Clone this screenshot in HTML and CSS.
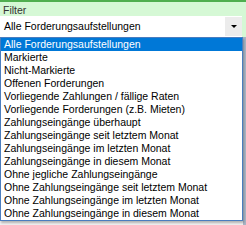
FILE: index.html
```html
<!DOCTYPE html>
<html lang="de">
<head>
  <meta charset="UTF-8">
  <title>Filter</title>
  <link rel="stylesheet" href="styles.css">
</head>
<body>
  <div class="panel">
    <div class="caption">Filter</div>
    <div class="combo">
      <span class="combo-text">Alle Forderungsaufstellungen</span>
      <span class="combo-button"><span class="arrow"></span></span>
    </div>
  </div>
  <div class="backdrop">
    <ul class="dropdown">
      <li class="selected">Alle Forderungsaufstellungen</li>
      <li>Markierte</li>
      <li>Nicht-Markierte</li>
      <li>Offenen Forderungen</li>
      <li>Vorliegende Zahlungen / fällige Raten</li>
      <li>Vorliegende Forderungen (z.B. Mieten)</li>
      <li>Zahlungseingänge überhaupt</li>
      <li>Zahlungseingänge seit letztem Monat</li>
      <li>Zahlungseingänge im letzten Monat</li>
      <li>Zahlungseingänge in diesem Monat</li>
      <li>Ohne jegliche Zahlungseingänge</li>
      <li>Ohne Zahlungseingänge seit letztem Monat</li>
      <li>Ohne Zahlungseingänge im letzten Monat</li>
      <li>Ohne Zahlungseingänge in diesem Monat</li>
    </ul>
  </div>
</body>
</html>
```

FILE: styles.css
```css
html, body {
  margin: 0;
  padding: 0;
}
body {
  width: 246px;
  height: 225px;
  overflow: hidden;
  font-family: "Liberation Sans", Arial, sans-serif;
  font-size: 10.5px;
  color: #000;
  background: #f0f0f0;
}
.panel {
  background: #d5f8d5;
  border-top: 2px solid #4fae4f;
  padding-top: 2px;
}
.caption {
  height: 12px;
  line-height: 12px;
  padding-left: 3px;
  color: #333;
}
.combo {
  display: flex;
  align-items: stretch;
  height: 21px;
  margin-right: 4px;
  background: #fff;
}
.combo-text {
  flex: 1;
  line-height: 21px;
  padding-left: 4px;
}
.combo-button {
  width: 17px;
  margin: 1px 0;
  background: #ececec;
  display: flex;
  align-items: center;
  justify-content: center;
}
.arrow {
  width: 0;
  height: 0;
  border-left: 3px solid transparent;
  border-right: 3px solid transparent;
  border-top: 3px solid #000;
}
.backdrop {
  height: 188px;
  background: linear-gradient(to right, #f0f0f0 243px, #a8b4c4 243px);
}
.dropdown {
  list-style: none;
  margin: 0;
  padding: 0;
  width: 241px;
  border: 1px solid #4a7dbf;
  background: #fff;
  box-shadow: 1px 2px 2px rgba(0, 0, 0, 0.25);
}
.dropdown li {
  height: 13px;
  line-height: 13px;
  padding-left: 3px;
  white-space: nowrap;
}
.dropdown li.selected {
  background: #0078d7;
  color: #fff;
}
```
